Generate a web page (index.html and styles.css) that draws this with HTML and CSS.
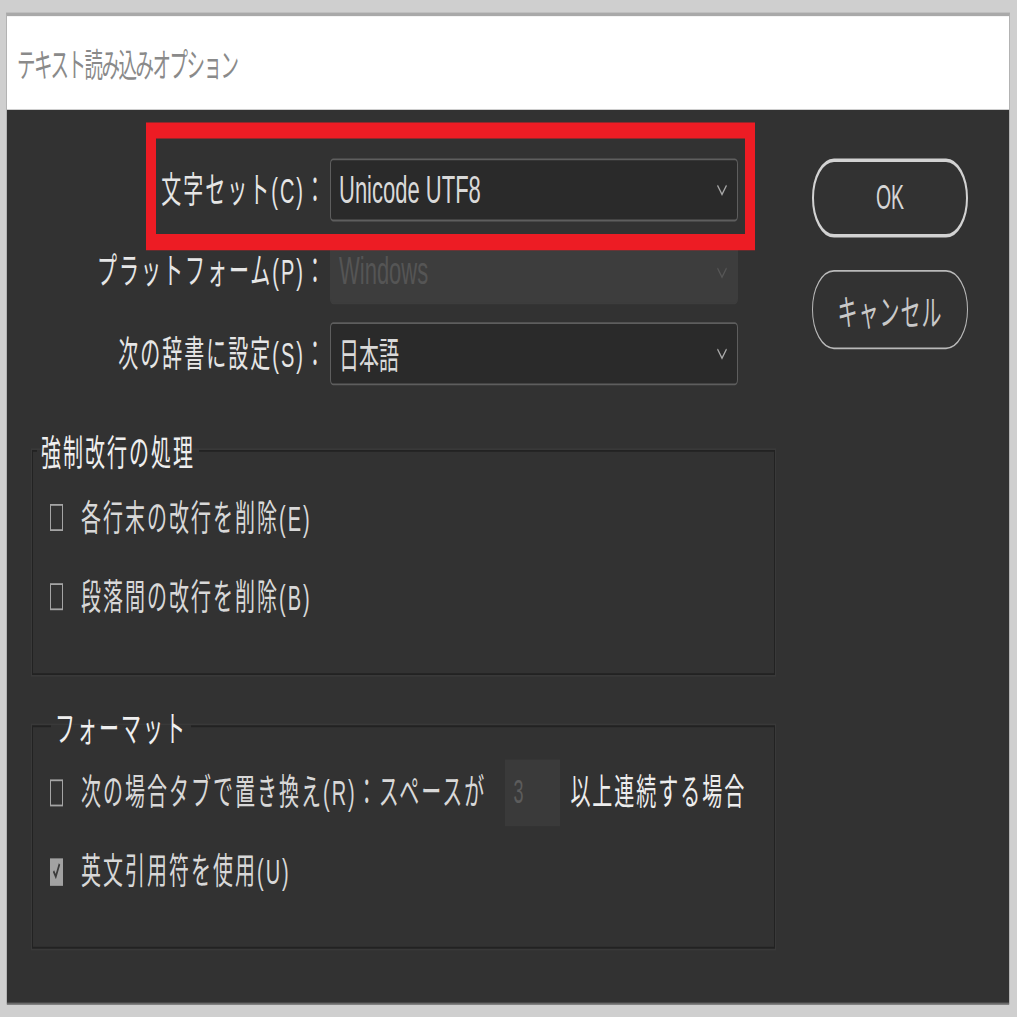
FILE: index.html
```html
<!DOCTYPE html>
<html lang="ja">
<head>
<meta charset="utf-8">
<title>テキスト読み込みオプション</title>
<link rel="stylesheet" href="styles.css">
</head>
<body>
<div class="stage">
  <div class="window">
    <div class="titlebar"><span class="title">テキスト読み込みオプション</span></div>
    <div class="dialog-body">
      <div class="form">
        <div class="field">
          <label class="field-label">文字セット(C)：</label>
          <div class="select">
            <span class="select-value">Unicode UTF8</span>
            <svg class="chevron" viewBox="0 0 12 7" width="12" height="7"><polyline points="1.5,1 6,6 10.5,1" fill="none" stroke="#a8a8a8" stroke-width="1.1"/></svg>
          </div>
        </div>
        <div class="field">
          <label class="field-label">プラットフォーム(P)：</label>
          <div class="select select-disabled">
            <span class="select-value">Windows</span>
            <svg class="chevron" viewBox="0 0 12 7" width="12" height="7"><polyline points="1.5,1 6,6 10.5,1" fill="none" stroke="#555555" stroke-width="1.1"/></svg>
          </div>
        </div>
        <div class="field field-last">
          <label class="field-label">次の辞書に設定(S)：</label>
          <div class="select">
            <span class="select-value select-value-jp">日本語</span>
            <svg class="chevron" viewBox="0 0 12 7" width="12" height="7"><polyline points="1.5,1 6,6 10.5,1" fill="none" stroke="#a8a8a8" stroke-width="1.1"/></svg>
          </div>
        </div>

        <fieldset class="group group-breaks">
          <legend class="group-legend">強制改行の処理</legend>
          <div class="check-row"><span class="checkbox"></span><span class="check-label">各行末の改行を削除(E)</span></div>
          <div class="check-row"><span class="checkbox"></span><span class="check-label">段落間の改行を削除(B)</span></div>
        </fieldset>

        <fieldset class="group group-format">
          <legend class="group-legend legend-format">フォーマット</legend>
          <div class="check-row">
            <span class="checkbox"></span><span class="check-label">次の場合タブで置き換え(R)：スペースが</span>
            <span class="num-input">3</span>
            <span class="check-label check-label-bright">以上連続する場合</span>
          </div>
          <div class="check-row">
            <span class="checkbox checkbox-checked"><svg viewBox="0 0 13 15" width="13" height="15"><polyline points="3.5,8 5.8,11 9.5,4" fill="none" stroke="#3c3c3c" stroke-width="1.6"/></svg></span>
            <span class="check-label">英文引用符を使用(U)</span>
          </div>
        </fieldset>
      </div>

      <div class="actions">
        <button class="btn btn-primary">OK</button>
        <button class="btn btn-cancel">キャンセル</button>
      </div>

      <div class="highlight"></div>
    </div>
  </div>
</div>
</body>
</html>
```

FILE: styles.css
```css
html {
  margin: 0;
  padding: 0;
  background: #cfcfcf;
  overflow: hidden;
}

body {
  margin: 0;
  padding: 0;
  height: 1017px;
  background: #cfcfcf;
}

.stage {
  width: 1017px;
  height: 565px;
  box-sizing: border-box;
  padding: 7.2px 7px 0 6px;
  transform: scaleY(1.8);
  transform-origin: 0 0;
  font-family: "Liberation Sans", "Noto Sans CJK JP", sans-serif;
}

.window {
  width: 1004px;
  box-sizing: border-box;
  border-top: 2px solid #a9a9a9;
  border-left: 1px solid #b3b3b3;
  border-right: 1px solid #b3b3b3;
}

.titlebar {
  height: 51.9px;
  background: #ffffff;
  display: flex;
  align-items: center;
  padding-left: 10px;
}

.title {
  font-family: "Noto Sans CJK JP", sans-serif;
  font-size: 18.5px;
  letter-spacing: -1.5px;
  color: #8a8a8a;
  line-height: 1;
}

.dialog-body {
  position: relative;
  height: 497px;
  background: #323232;
  display: flex;
  padding-top: 26.7px;
  box-sizing: border-box;
  border-bottom: 1px solid #6a6a6a;
}

.form {
  width: 768px;
  display: flex;
  flex-direction: column;
}

.field {
  display: flex;
  align-items: center;
  height: 35.5px;
  margin-bottom: 10px;
}

.field-last {
  margin-bottom: 0;
}

.field-label {
  width: 320px;
  text-align: right;
  font-size: 20px;
  letter-spacing: 2px;
  line-height: 24px;
  color: #e6e6e6;
}

.select {
  margin-left: 3px;
  width: 408px;
  height: 35.5px;
  box-sizing: border-box;
  border: 1px solid #5e5e5e;
  border-radius: 3px;
  background: #2a2a2a;
  display: flex;
  align-items: center;
  justify-content: space-between;
  padding: 0 9px 0 8px;
}

.select-value {
  font-size: 22px;
  line-height: 24px;
  color: #d9d9d9;
}

.select-value-jp {
  font-family: "Noto Sans CJK JP", sans-serif;
  font-size: 20px;
}

.select-disabled {
  border-color: #3d3d3d;
  background: #3d3d3d;
}

.select-disabled .select-value {
  color: #555555;
}

.chevron {
  display: block;
}

.group {
  margin: 0 0 0 25px;
  width: 743px;
  box-sizing: border-box;
  min-inline-size: 0;
  border: 1px solid #222222;
  box-shadow: 0 0 0 1px #393939;
  padding: 9.7px 0 27px 17px;
}

.group-breaks {
  margin-top: 24.7px;
}

.group-format {
  margin-top: 17px;
}

.group-legend {
  font-family: "Noto Sans CJK JP", sans-serif;
  font-size: 20px;
  line-height: 24px;
  letter-spacing: 2px;
  color: #efefef;
  padding: 0 4px;
  margin-left: -13px;
}

.legend-format {
  margin-left: 1px;
}

.check-row {
  display: flex;
  align-items: center;
  height: 30px;
}

.check-row + .check-row {
  margin-top: 14px;
}

.checkbox {
  width: 13px;
  height: 15px;
  box-sizing: border-box;
  border: 1.5px solid #a4a4a4;
  flex: none;
  margin-right: 18px;
  display: flex;
  overflow: hidden;
}

.checkbox-checked {
  background: #a2a2a2;
  border-color: #a2a2a2;
}

.checkbox-checked svg {
  margin: -1.5px;
  flex: none;
}

.check-label {
  font-size: 20px;
  line-height: 24px;
  letter-spacing: 2px;
  color: #d8d8d8;
  white-space: nowrap;
}

.check-label-bright {
  color: #ededed;
}

.num-input {
  width: 55px;
  height: 37px;
  margin: -3.5px 10px -3.5px 19px;
  box-sizing: border-box;
  background: #3a3a3a;
  padding-left: 8px;
  font-size: 18px;
  line-height: 37px;
  color: #5c5c5c;
  flex: none;
}

.actions {
  margin-left: 37px;
  width: 156px;
  display: flex;
  flex-direction: column;
}

.btn {
  height: 44px;
  width: 156px;
  box-sizing: border-box;
  border-radius: 22px;
  background: transparent;
  padding: 0;
  font-family: "Liberation Sans", "Noto Sans CJK JP", sans-serif;
  cursor: pointer;
}

.btn-primary {
  border: 2px solid #d2d2d2;
  font-size: 19.5px;
  color: #d6d6d6;
}

.btn-cancel {
  margin-top: 18.3px;
  border: 1.5px solid #b9b9b9;
  font-size: 20px;
  letter-spacing: 1px;
  color: #c9c9c9;
}

.highlight {
  position: absolute;
  left: 139px;
  top: 6.7px;
  width: 609px;
  height: 71.1px;
  box-sizing: border-box;
  border-style: solid;
  border-color: #ed1c24;
  border-width: 9px 10px;
  pointer-events: none;
}
```
